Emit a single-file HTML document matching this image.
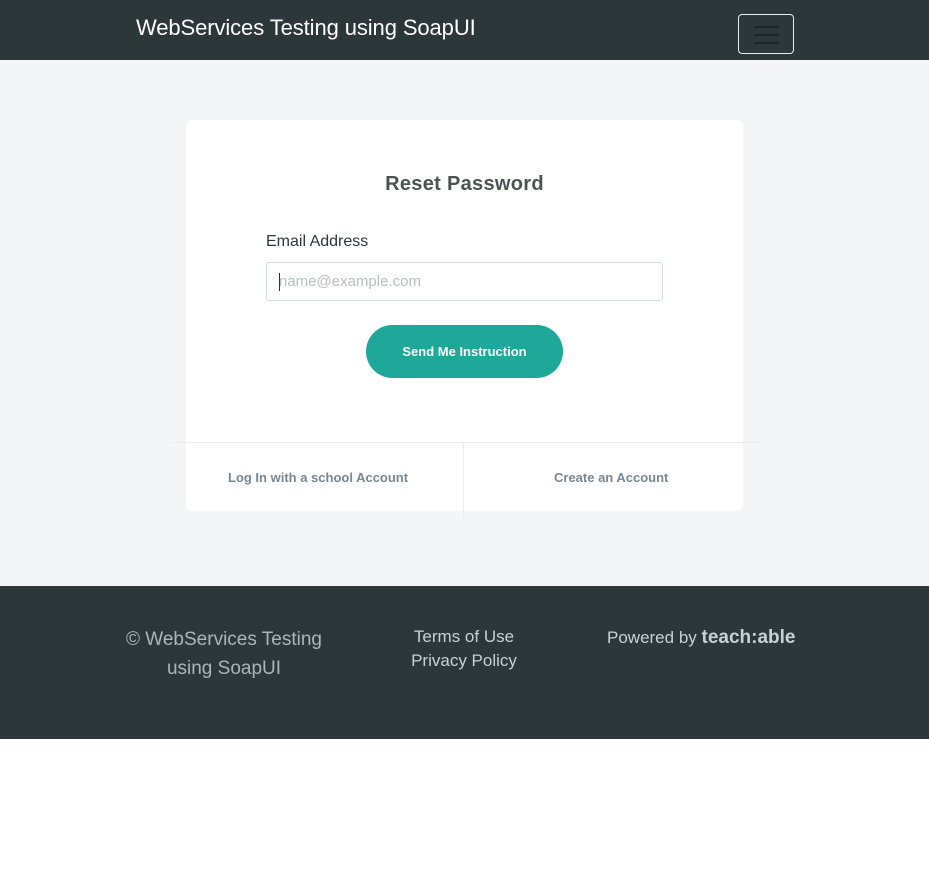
<!DOCTYPE html>
<html><head><style>
*{margin:0;padding:0;box-sizing:border-box}
body{width:929px;height:888px;background:#fff;font-family:"Liberation Sans",sans-serif;position:relative;overflow:hidden}
.nav{position:absolute;left:0;top:0;width:929px;height:60px;background:#2c3739}
.brand{position:absolute;left:136px;top:15px;color:#fff;font-size:22px;letter-spacing:-0.1px}
.tog{position:absolute;left:738px;top:14px;width:56px;height:40px;border:1px solid #e8ecee;border-radius:4px}
.tog i{position:absolute;left:15px;width:25px;height:2px;background:#1c2426}
.main{position:absolute;left:0;top:60px;width:929px;height:526px;background:#f4f5f7}
.card{position:absolute;left:186px;top:120px;width:557px;height:391px;background:#fff;border-radius:6px}
h1{position:absolute;left:0;width:929px;top:173px;text-align:center;font-size:20px;color:#4a5455;font-weight:bold;letter-spacing:0.3px}
.lbl{position:absolute;left:266px;top:233px;font-size:16px;color:#2c3739}
.inp{position:absolute;left:266px;top:262px;width:397px;height:39px;border:1px solid #d5dbdd;border-radius:3px;background:#fff;color:#b7bfc3;font-size:15px;padding:10px 12px}
.inp:before{content:"";position:absolute;left:12px;top:10px;width:1px;height:18px;background:#333}
.btn{position:absolute;left:366px;top:325px;width:197px;height:53px;border-radius:27px;background:#1ea89a;color:#fff;font-size:13px;font-weight:bold;text-align:center;line-height:53px}
.hl{position:absolute;left:172px;top:442px;width:587px;height:1px;background:#ebeced}
.vl{position:absolute;left:463px;top:443px;width:1px;height:79px;background:#ebeced}
.lk{position:absolute;top:470px;font-size:13px;color:#7a8791;font-weight:bold}
.foot{position:absolute;left:0;top:586px;width:929px;height:153px;background:#2c3739;color:#c9d0d3}
.foot div{position:absolute;text-align:center;font-size:18px}
</style></head><body>
<div class="nav"><div class="brand">WebServices Testing using SoapUI</div>
<div class="tog"><i style="top:11px"></i><i style="top:19px"></i><i style="top:27px"></i></div></div>
<div class="main"></div>
<div class="card"></div>
<h1>Reset Password</h1>
<div class="lbl">Email Address</div>
<div class="inp">name@example.com</div>
<div class="btn">Send Me Instruction</div>
<div class="hl"></div><div class="vl"></div>
<div class="lk" style="left:228px">Log In with a school Account</div>
<div class="lk" style="left:554px">Create an Account</div>
<div class="foot">
<div style="left:114px;top:39px;width:220px;line-height:29px;color:#a9b6ba;font-size:19px">© WebServices Testing using SoapUI</div>
<div style="left:394px;top:39px;width:140px;font-size:17px;line-height:24px">Terms of Use<br>Privacy Policy</div>
<div style="left:607px;top:41px;font-size:17px">Powered by <b style="font-size:19px">teach:able</b></div>
</div>
</body></html>
